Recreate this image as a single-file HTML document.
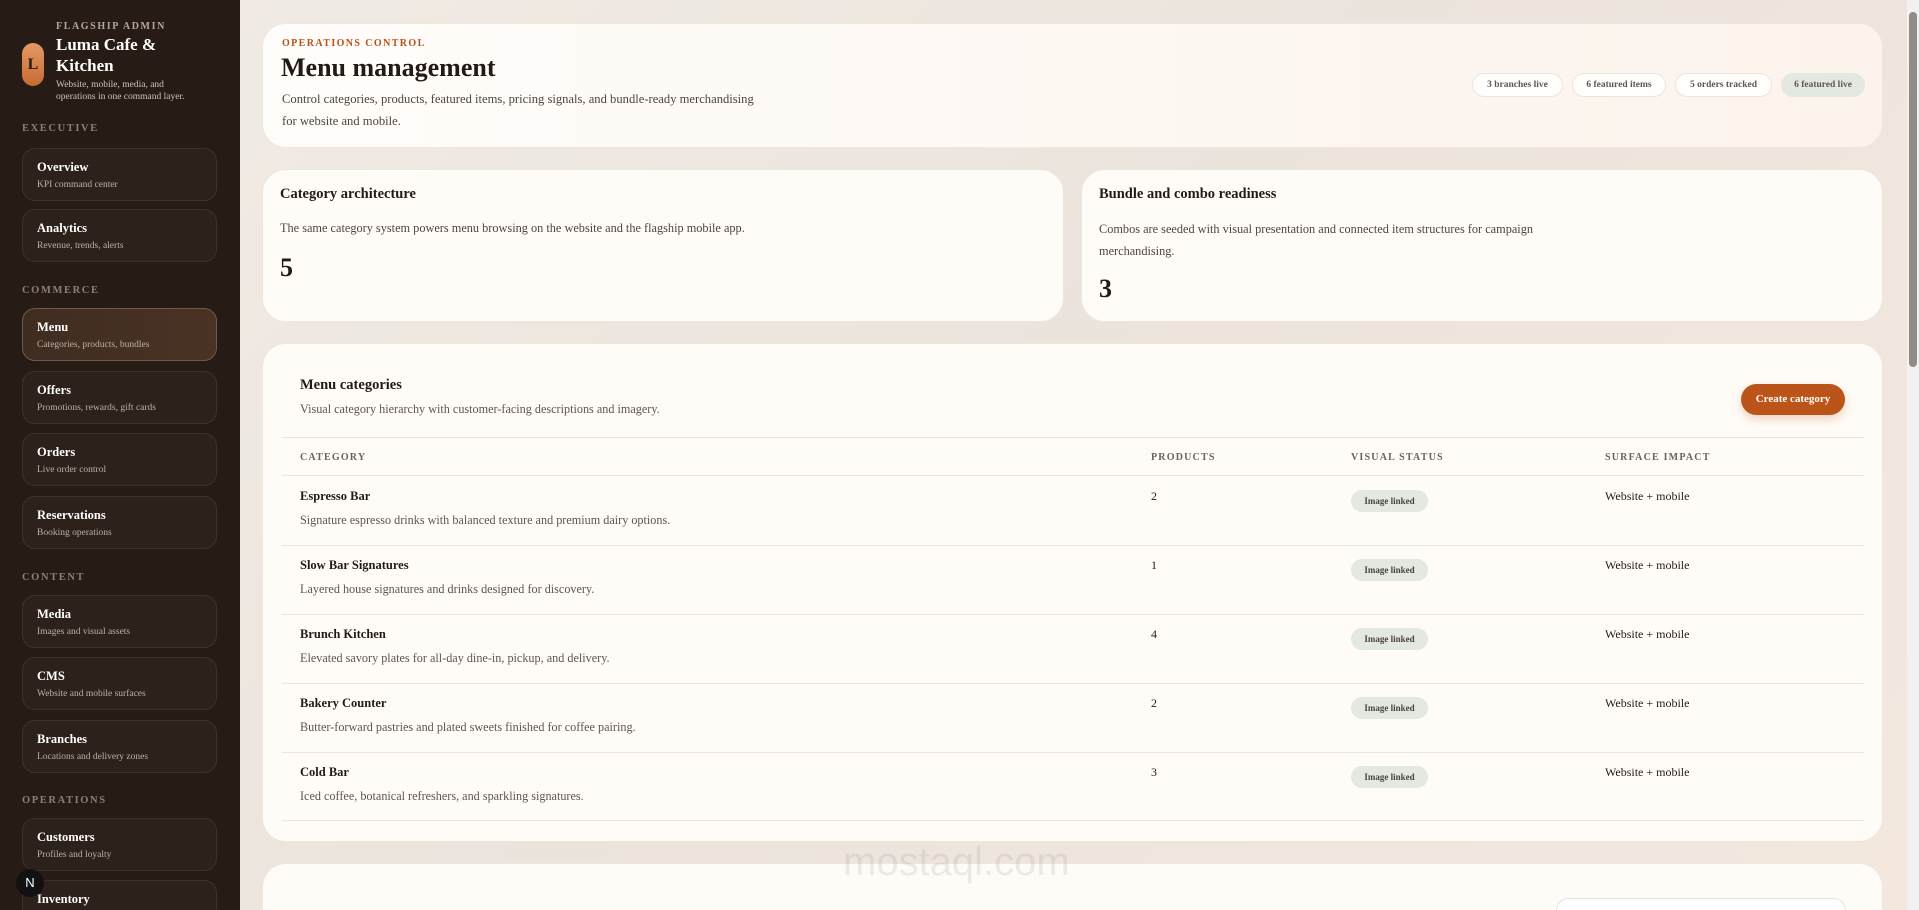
<!DOCTYPE html>
<html><head><meta charset="utf-8"><style>
*{box-sizing:border-box;margin:0;padding:0}
html{width:1919px;height:910px;overflow:hidden}
body{width:1919px;height:910px;overflow:hidden;font-family:"Liberation Serif",serif;background:linear-gradient(135deg,#f2ece6 0%,#ebe4dd 50%,#f4e8de 100%);position:relative;color:#231a15}
.sb{position:absolute;left:0;top:0;width:240px;height:910px;background:#271b15;overflow:hidden}
.a{position:absolute}
.sec{position:absolute;left:22px;font-size:10.5px;letter-spacing:1.6px;color:#8b7f76;font-weight:bold}
.nav{position:absolute;left:22px;width:195px;height:53px;border:1px solid #3e322b;border-radius:13px;background:#2d211b}
.nav b{position:absolute;left:14px;top:11px;font-size:12.5px;color:#fff}
.nav span{position:absolute;left:14px;top:31px;font-size:9.5px;color:#bdb2a9}
.nav.on{background:linear-gradient(90deg,#3f2c20,#4a3325);border-color:#6b5a4e}
.card{position:absolute;background:#fffcf8;border-radius:24px;border:1px solid #efe6de}
.pill{position:absolute;top:73px;height:24px;border:1px solid #eee3dc;border-radius:12px;background:#fffefc;font-size:9.5px;font-weight:bold;color:#5f5650;text-align:center;line-height:22px}
.th{position:absolute;top:452px;font-size:10px;letter-spacing:1.2px;font-weight:bold;color:#6c625b}
.hr{position:absolute;left:282px;width:1582px;height:1px;background:#e9e4de}
.rt{position:absolute;left:300px;font-size:12.5px;font-weight:bold;color:#231a15}
.rd{position:absolute;left:300px;font-size:12.2px;color:#5e554f}
.rn{position:absolute;left:1151px;font-size:12px}
.bd{position:absolute;left:1351px;width:77px;height:22px;border-radius:11px;background:#e3e8e1;font-size:9px;font-weight:bold;text-align:center;line-height:22px;color:#4a433e}
.rs{position:absolute;left:1605px;font-size:12px}
</style></head><body>
<div class="sb">
 <div class="a" style="left:22px;top:43px;width:22px;height:43px;border-radius:11px;background:linear-gradient(180deg,#e39a66,#c76a33);color:#2a1b12;font-size:16px;font-weight:bold;text-align:center;line-height:43px">L</div>
 <div class="a" style="left:56px;top:21px;font-size:10px;letter-spacing:1.6px;color:#b3a79d;font-weight:bold">FLAGSHIP ADMIN</div>
 <div class="a" style="left:56px;top:34px;font-size:17px;line-height:21px;font-weight:bold;color:#fff">Luma Cafe &amp;<br>Kitchen</div>
 <div class="a" style="left:56px;top:79px;font-size:9.5px;line-height:12px;color:#cfc4bb">Website, mobile, media, and<br>operations in one command layer.</div>
 <div class="sec" style="top:123px">EXECUTIVE</div>
 <div class="nav" style="top:148px"><b>Overview</b><span>KPI command center</span></div>
 <div class="nav" style="top:209px"><b>Analytics</b><span>Revenue, trends, alerts</span></div>
 <div class="sec" style="top:285px">COMMERCE</div>
 <div class="nav on" style="top:308px"><b>Menu</b><span>Categories, products, bundles</span></div>
 <div class="nav" style="top:371px"><b>Offers</b><span>Promotions, rewards, gift cards</span></div>
 <div class="nav" style="top:433px"><b>Orders</b><span>Live order control</span></div>
 <div class="nav" style="top:496px"><b>Reservations</b><span>Booking operations</span></div>
 <div class="sec" style="top:572px">CONTENT</div>
 <div class="nav" style="top:595px"><b>Media</b><span>Images and visual assets</span></div>
 <div class="nav" style="top:657px"><b>CMS</b><span>Website and mobile surfaces</span></div>
 <div class="nav" style="top:720px"><b>Branches</b><span>Locations and delivery zones</span></div>
 <div class="sec" style="top:795px">OPERATIONS</div>
 <div class="nav" style="top:818px"><b>Customers</b><span>Profiles and loyalty</span></div>
 <div class="nav" style="top:880px"><b>Inventory</b><span></span></div>
 <div class="a" style="left:16px;top:869px;width:28px;height:28px;border-radius:14px;background:#111;color:#fff;font-family:'Liberation Sans',sans-serif;font-size:13px;text-align:center;line-height:28px">N</div>
</div>

<div class="card" style="left:262px;top:23px;width:1621px;height:125px;background:linear-gradient(90deg,#fffdfa,#fcf3ec)"></div>
<div class="a" style="left:282px;top:38px;font-size:10px;letter-spacing:1.4px;color:#b8501a;font-weight:bold">OPERATIONS CONTROL</div>
<div class="a" style="left:281px;top:53px;font-size:26px;font-weight:bold">Menu management</div>
<div class="a" style="left:282px;top:88px;font-size:12.6px;line-height:22px;color:#4e4540">Control categories, products, featured items, pricing signals, and bundle-ready merchandising<br>for website and mobile.</div>
<div class="pill" style="left:1472px;width:91px">3 branches live</div>
<div class="pill" style="left:1572px;width:94px">6 featured items</div>
<div class="pill" style="left:1675px;width:97px">5 orders tracked</div>
<div class="pill" style="left:1781px;width:84px;background:#e3e8e1;border-color:#e3e8e1">6 featured live</div>

<div class="card" style="left:262px;top:169px;width:802px;height:153px"></div>
<div class="a" style="left:280px;top:186px;font-size:14.5px;font-weight:bold">Category architecture</div>
<div class="a" style="left:280px;top:221px;font-size:12.3px;color:#4e4540">The same category system powers menu browsing on the website and the flagship mobile app.</div>
<div class="a" style="left:280px;top:253px;font-size:26px;font-weight:bold">5</div>

<div class="card" style="left:1081px;top:169px;width:802px;height:153px"></div>
<div class="a" style="left:1099px;top:186px;font-size:14.5px;font-weight:bold">Bundle and combo readiness</div>
<div class="a" style="left:1099px;top:218px;font-size:12.3px;line-height:22px;color:#4e4540">Combos are seeded with visual presentation and connected item structures for campaign<br>merchandising.</div>
<div class="a" style="left:1099px;top:274px;font-size:26px;font-weight:bold">3</div>

<div class="card" style="left:262px;top:343px;width:1621px;height:499px"></div>
<div class="a" style="left:300px;top:377px;font-size:14.5px;font-weight:bold">Menu categories</div>
<div class="a" style="left:300px;top:402px;font-size:12.2px;color:#5e554f">Visual category hierarchy with customer-facing descriptions and imagery.</div>
<div class="a" style="left:1741px;top:384px;width:104px;height:31px;border-radius:16px;background:#bb5419;color:#fff;font-size:11px;font-weight:bold;text-align:center;line-height:31px;box-shadow:0 4px 10px rgba(187,84,25,.25)">Create category</div>
<div class="hr" style="top:437px"></div>
<div class="th" style="left:300px">CATEGORY</div>
<div class="th" style="left:1151px">PRODUCTS</div>
<div class="th" style="left:1351px">VISUAL STATUS</div>
<div class="th" style="left:1605px">SURFACE IMPACT</div>
<div class="hr" style="top:475px"></div>

<div class="rt" style="top:489px">Espresso Bar</div><div class="rd" style="top:513px">Signature espresso drinks with balanced texture and premium dairy options.</div><div class="rn" style="top:489px">2</div><div class="bd" style="top:490px">Image linked</div><div class="rs" style="top:489px">Website + mobile</div>
<div class="hr" style="top:545px"></div>
<div class="rt" style="top:558px">Slow Bar Signatures</div><div class="rd" style="top:582px">Layered house signatures and drinks designed for discovery.</div><div class="rn" style="top:558px">1</div><div class="bd" style="top:559px">Image linked</div><div class="rs" style="top:558px">Website + mobile</div>
<div class="hr" style="top:614px"></div>
<div class="rt" style="top:627px">Brunch Kitchen</div><div class="rd" style="top:651px">Elevated savory plates for all-day dine-in, pickup, and delivery.</div><div class="rn" style="top:627px">4</div><div class="bd" style="top:628px">Image linked</div><div class="rs" style="top:627px">Website + mobile</div>
<div class="hr" style="top:683px"></div>
<div class="rt" style="top:696px">Bakery Counter</div><div class="rd" style="top:720px">Butter-forward pastries and plated sweets finished for coffee pairing.</div><div class="rn" style="top:696px">2</div><div class="bd" style="top:697px">Image linked</div><div class="rs" style="top:696px">Website + mobile</div>
<div class="hr" style="top:752px"></div>
<div class="rt" style="top:765px">Cold Bar</div><div class="rd" style="top:789px">Iced coffee, botanical refreshers, and sparkling signatures.</div><div class="rn" style="top:765px">3</div><div class="bd" style="top:766px">Image linked</div><div class="rs" style="top:765px">Website + mobile</div>
<div class="hr" style="top:820px"></div>

<div class="card" style="left:262px;top:863px;width:1621px;height:47px;border-bottom-left-radius:0;border-bottom-right-radius:0;border-bottom:none"></div>
<div class="a" style="left:1556px;top:898px;width:290px;height:12px;border:1px solid #e9e2dc;border-bottom:none;border-radius:15px 15px 0 0;background:#fff"></div>
<div class="a" style="left:843px;top:840px;font-family:'Liberation Sans',sans-serif;font-size:40px;color:rgba(150,150,150,.18)">mostaql.com</div>

<div class="a" style="left:1907px;top:0;width:12px;height:910px;background:#f1f1f1"></div>
<div class="a" style="left:1909px;top:12px;width:8px;height:355px;border-radius:4px;background:#928c87"></div>
</body></html>
